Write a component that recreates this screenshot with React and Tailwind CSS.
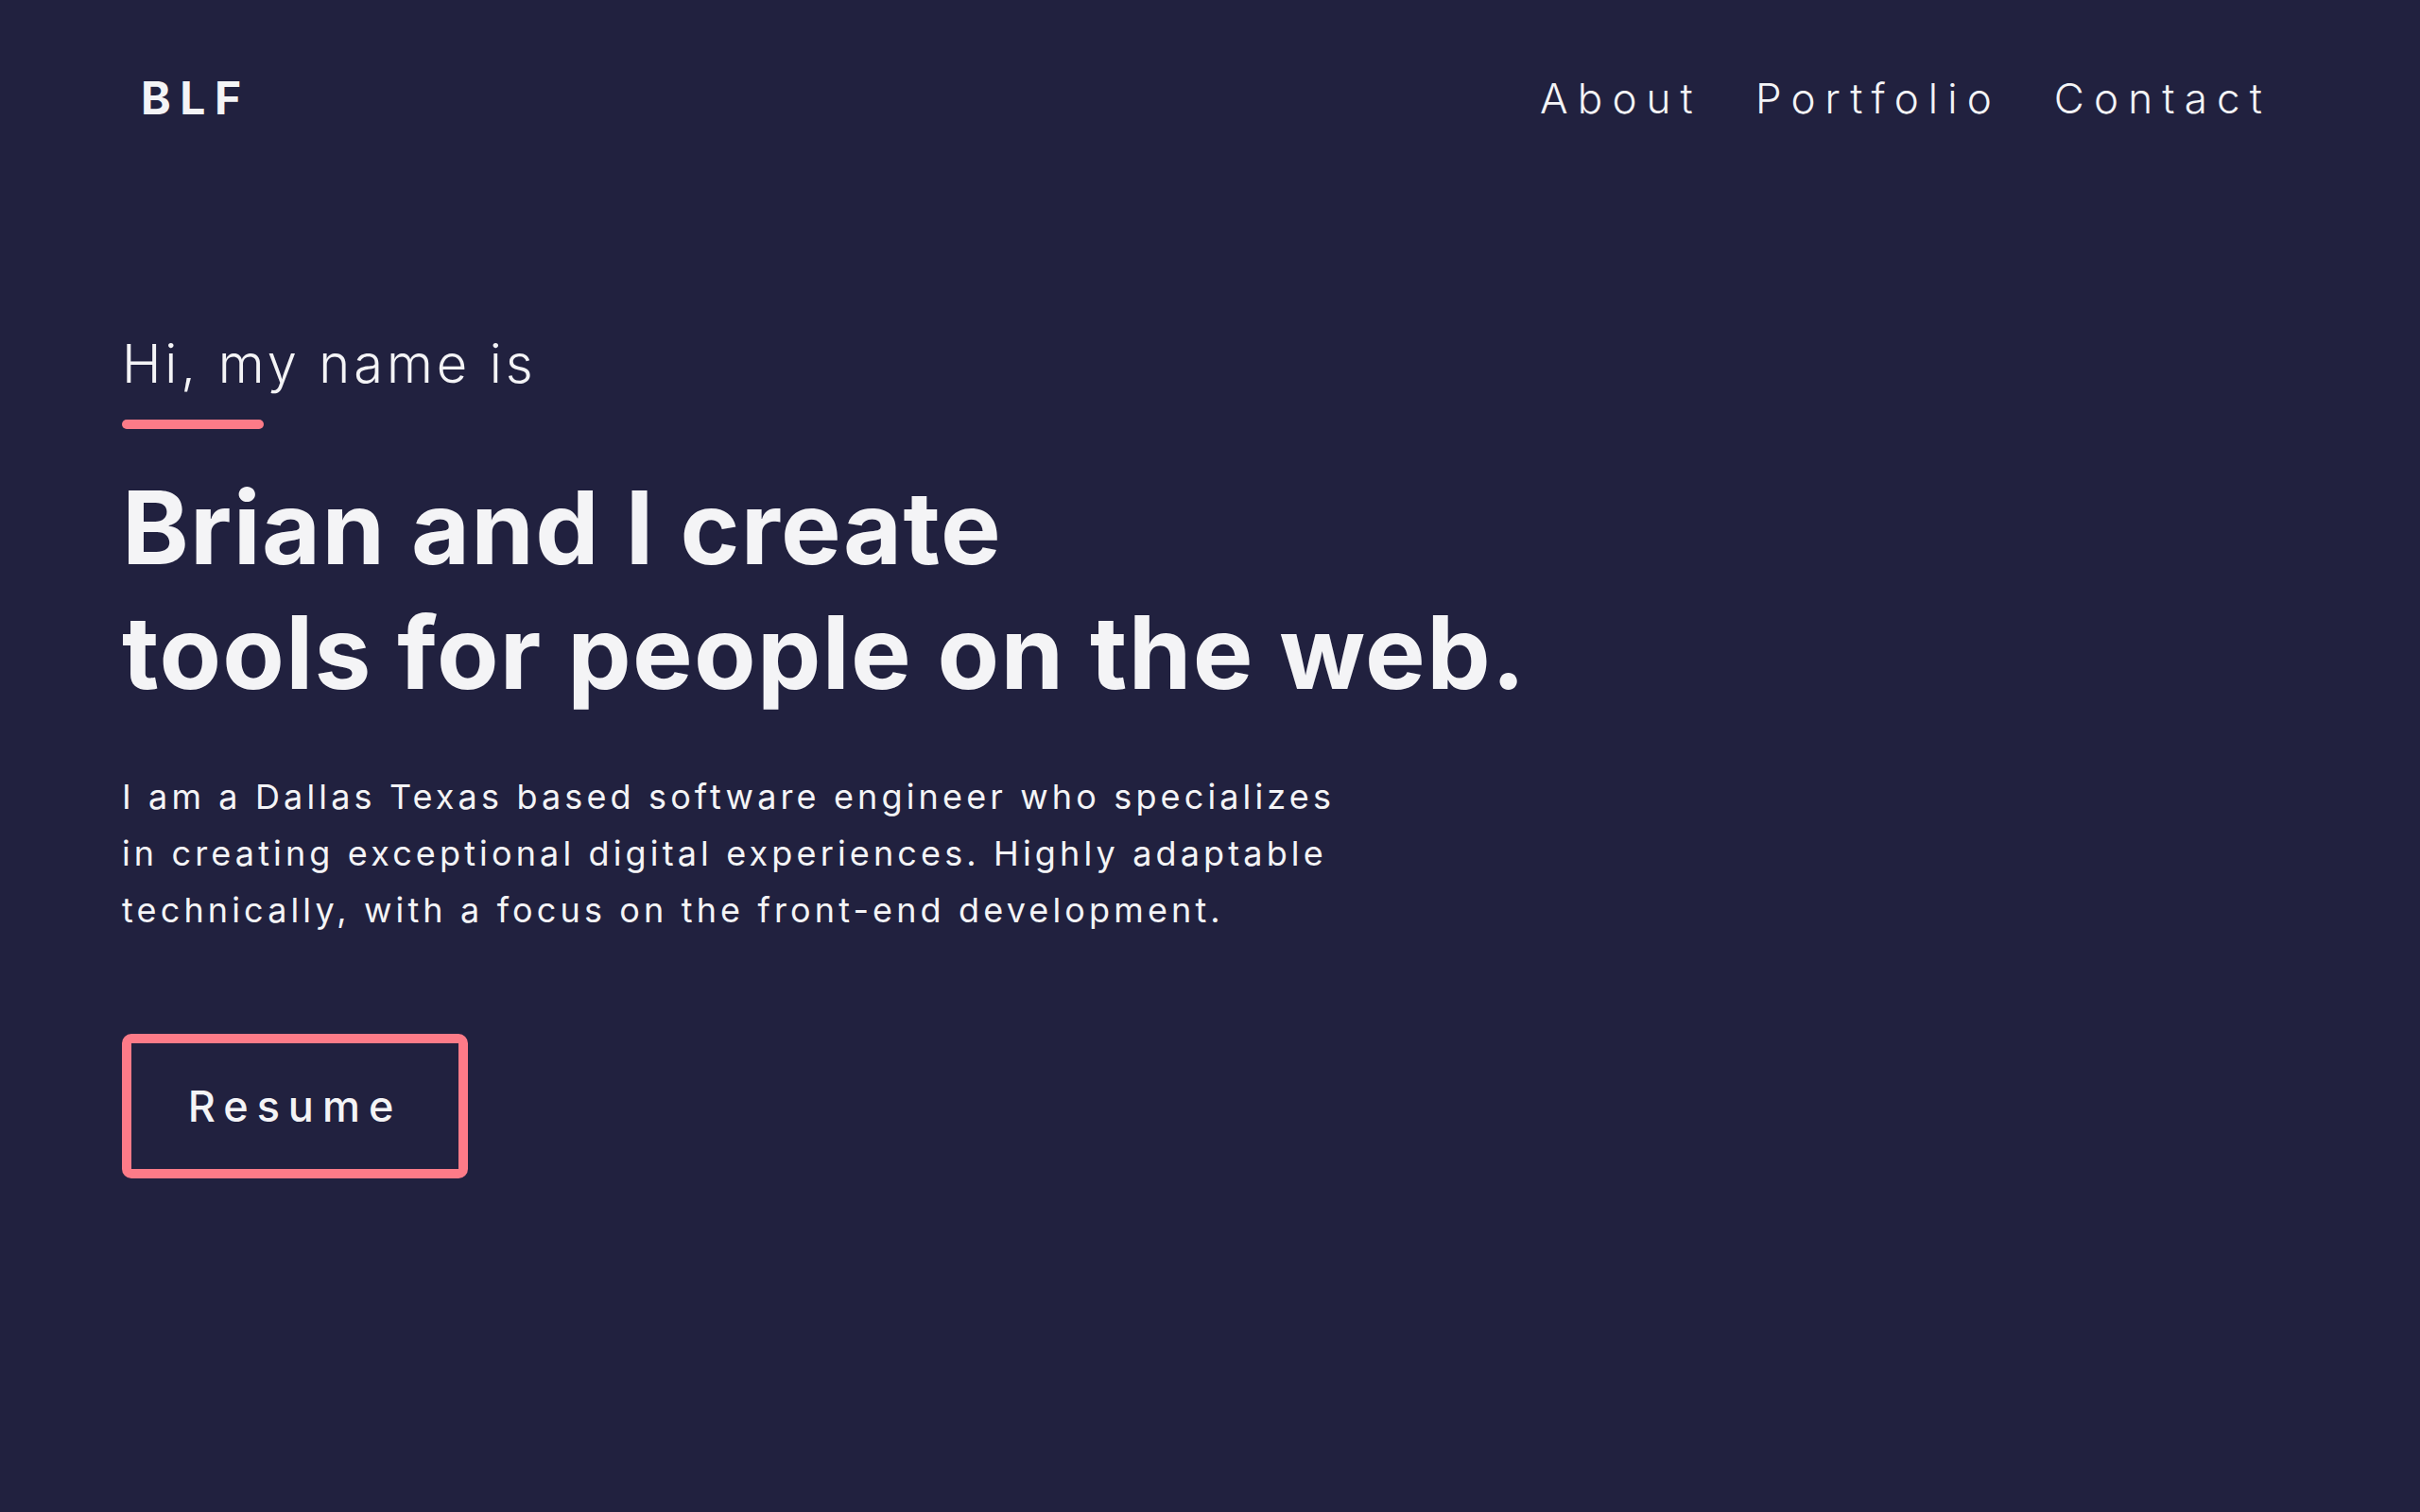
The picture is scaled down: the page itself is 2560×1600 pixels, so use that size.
import React from "react";

const navLinks = ["About", "Portfolio", "Contact"];

function App() {
  return (
    <div className="min-h-screen bg-[#21213f] text-[#f4f4f6] font-['Inter','Liberation_Sans',sans-serif]">
      <header className="h-[208px] flex items-center justify-between pl-[149px] pr-[157px]">
        <a href="#" className="text-[48px] leading-none font-bold tracking-[0.2em]">
          BLF
        </a>
        <nav className="flex items-center gap-[56px]">
          {navLinks.map((link) => (
            <a
              key={link}
              href="#"
              className="text-[44px] leading-none font-light tracking-[0.23em]"
            >
              {link}
            </a>
          ))}
        </nav>
      </header>

      <main className="pl-[129px] pt-[149px]">
        <p className="text-[56px] leading-none font-light tracking-[0.07em]">
          Hi, my name is
        </p>
        <div className="mt-[31px] w-[150px] h-[10px] rounded-full bg-[#fd7b88]" />

        <h1 className="mt-[38px] text-[107px] leading-[132px] font-bold tracking-[0.012em]">
          Brian and I create
          <br />
          tools for people on the web.
        </h1>

        <p className="mt-[57px] text-[36px] leading-[60px] font-normal tracking-[0.115em]">
          I am a Dallas Texas based software engineer who specializes
          <br />
          in creating exceptional digital experiences. Highly adaptable
          <br />
          technically, with a focus on the front-end development.
        </p>

        <button className="mt-[101px] w-[366px] h-[153px] border-[10px] border-[#fd7b88] rounded-[10px] text-[45px] font-medium tracking-[0.2em] flex items-center justify-center">
          Resume
        </button>
      </main>
    </div>
  );
}

export default App;
